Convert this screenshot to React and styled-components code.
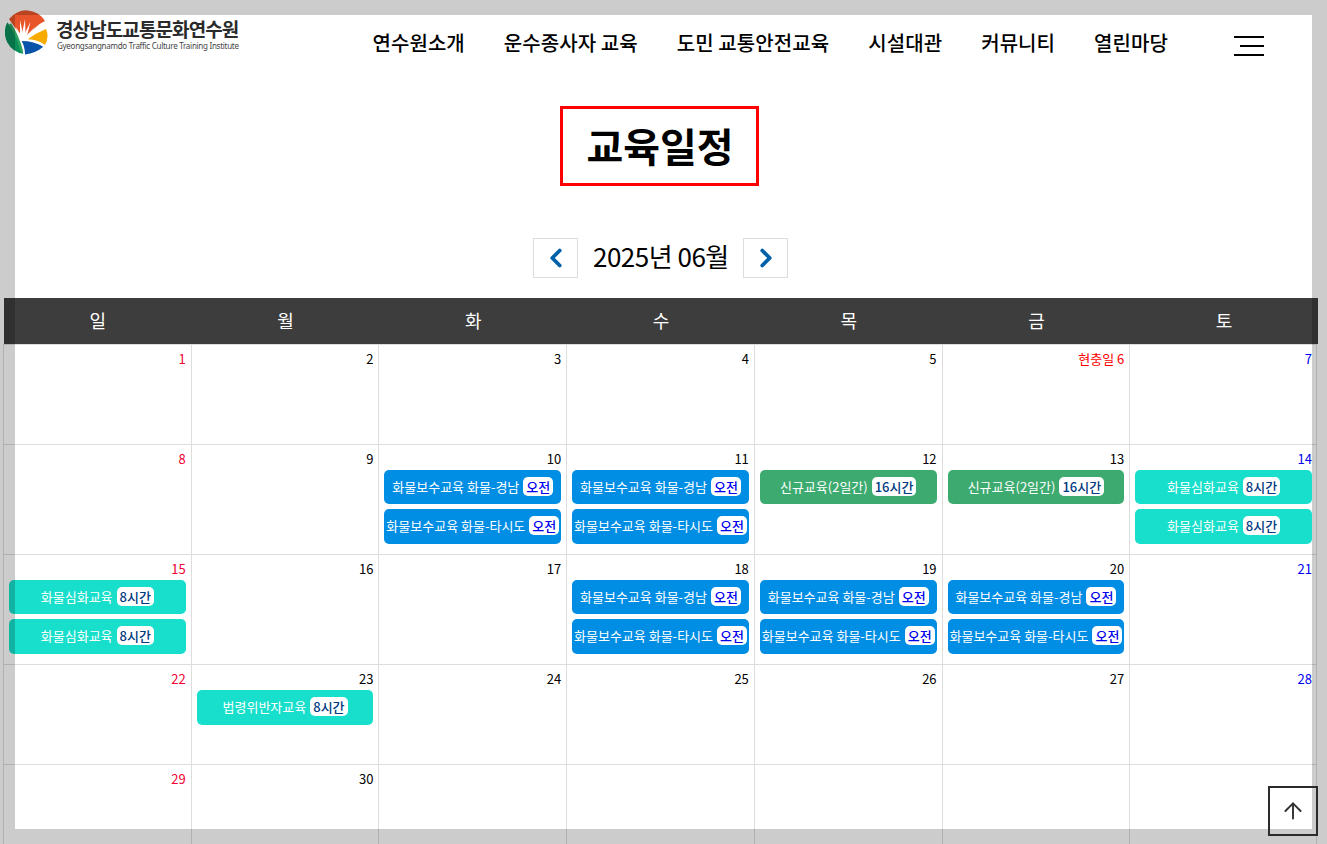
import React from "react";
import styled, { createGlobalStyle } from "styled-components";
import { ArrowUp, ChevronLeft, ChevronRight } from "lucide-react";

const NAV_ITEMS = ["연수원소개", "운수종사자 교육", "도민 교통안전교육", "시설대관", "커뮤니티", "열린마당"];
const WEEKDAYS = ["일", "월", "화", "수", "목", "금", "토"];

const GN = { title: "화물보수교육 화물-경남", badge: "오전", kind: "blue" };
const TA = { title: "화물보수교육 화물-타시도", badge: "오전", kind: "blue" };
const NEW = { title: "신규교육(2일간)", badge: "16시간", kind: "green" };
const DEEP = { title: "화물심화교육", badge: "8시간", kind: "teal" };
const LAW = { title: "법령위반자교육", badge: "8시간", kind: "teal", tall: true };

const EVENTS = {
  10: [GN, TA],
  11: [GN, TA],
  12: [NEW],
  13: [NEW],
  14: [DEEP, DEEP],
  15: [DEEP, DEEP],
  18: [GN, TA],
  19: [GN, TA],
  20: [GN, TA],
  23: [LAW],
};

const WEEKS = [
  { height: 100, days: [1, 2, 3, 4, 5, 6, 7] },
  { height: 110, days: [8, 9, 10, 11, 12, 13, 14] },
  { height: 110, days: [15, 16, 17, 18, 19, 20, 21] },
  { height: 100, days: [22, 23, 24, 25, 26, 27, 28] },
  { height: 100, days: [29, 30, null, null, null, null, null] },
];

const BAR_COLORS = { blue: "#008ee4", green: "#3dab70", teal: "#17dfcb" };
const BADGE_COLORS = { blue: "#0000ee", green: "#003a80", teal: "#003a80" };
const DAY_COLORS = ["#f00033", "#000", "#000", "#000", "#000", "#000", "#0000f0"];

const GlobalStyle = createGlobalStyle`
  html, body {
    margin: 0;
    padding: 0;
    height: 100%;
    overflow: hidden;
    background: #fff;
    font-family: "Noto Sans CJK KR", "Noto Sans", sans-serif;
    color: #000;
  }
`;

const Frame = styled.div`
  position: fixed;
  inset: 0;
  border: 15px solid rgba(0, 0, 0, 0.2);
  pointer-events: none;
  z-index: 10;
`;

const Header = styled.header`
  display: flex;
  align-items: flex-start;
  height: 106px;
  padding: 10px 63px 0 5px;
  box-sizing: border-box;
`;

const Logo = styled.a`
  display: flex;
  align-items: flex-start;
  gap: 8px;
`;

const LogoText = styled.div`
  display: flex;
  flex-direction: column;
  margin-top: 6px;
`;

const LogoTitle = styled.span`
  font-size: 19px;
  line-height: 25px;
  font-weight: 700;
  letter-spacing: -0.9px;
  margin-left: -1px;
  color: #2b2b2b;
  white-space: nowrap;
`;

const LogoSub = styled.span`
  font-family: "Noto Sans", sans-serif;
  font-size: 8px;
  line-height: 10px;
  letter-spacing: -0.27px;
  color: #444;
  white-space: nowrap;
`;

const Nav = styled.nav`
  display: flex;
  gap: 39px;
  margin-left: auto;
  margin-top: 19px;
`;

const NavItem = styled.a`
  font-size: 20px;
  line-height: 28px;
  font-weight: 500;
  letter-spacing: 0.08px;
  white-space: nowrap;
`;

const Burger = styled.button`
  display: flex;
  flex-direction: column;
  align-items: flex-end;
  gap: 7px;
  width: 30px;
  margin: 26px 0 0 66px;
  padding: 0;
  border: 0;
  background: none;
`;

const BurgerLine = styled.span`
  display: block;
  height: 2px;
  width: ${({ $short }) => ($short ? "24px" : "30px")};
  background: #000;
`;

const TitleRow = styled.div`
  display: flex;
  justify-content: center;
  padding-right: 8px;
`;

const Title = styled.h1`
  margin: 0;
  width: 199px;
  height: 80px;
  box-sizing: border-box;
  border: 3px solid #f00;
  padding-left: 1px;
  font-size: 40px;
  line-height: 72px;
  font-weight: 700;
  text-align: center;
`;

const MonthBar = styled.div`
  display: flex;
  align-items: center;
  justify-content: center;
  gap: 15px;
  height: 40px;
  margin-top: 52px;
  margin-bottom: 20px;
  padding-right: 6px;
`;

const MonthButton = styled.button`
  display: flex;
  align-items: center;
  justify-content: center;
  width: 45px;
  height: 40px;
  padding: 0;
  background: #fff;
  border: 1px solid #ddd;
  color: #0060a8;
`;

const MonthLabel = styled.span`
  width: 135px;
  margin-bottom: 4px;
  font-size: 26px;
  line-height: 38px;
  letter-spacing: -0.5px;
  text-align: center;
  white-space: nowrap;
`;

const Calendar = styled.section`
  margin-left: 3px;
  width: 1314px;
`;

const WeekHead = styled.div`
  display: grid;
  grid-template-columns: repeat(7, 1fr);
  height: 46px;
  margin: 0 -1px 0 1px;
  background: #3d3d3d;
`;

const WeekName = styled.div`
  font-size: 18px;
  line-height: 44px;
  text-align: center;
  color: #fff;
`;

const Week = styled.div`
  display: grid;
  grid-template-columns: repeat(7, 1fr);
  height: ${({ $height }) => $height}px;
  box-sizing: border-box;
  border-top: 1px solid #ddd;
`;

const Day = styled.div`
  display: flex;
  flex-direction: column;
  gap: 5px;
  padding: 4px 5px 0;
  min-width: 0;
  border-left: 1px solid #ddd;
  &:last-child {
    border-right: 1px solid #ddd;
    padding-right: 4px;
  }
`;

const DayNumber = styled.div`
  height: 16px;
  font-size: 13px;
  line-height: 20px;
  text-align: right;
  color: ${({ $color }) => $color};
`;

const EventBar = styled.a`
  display: flex;
  align-items: center;
  justify-content: center;
  gap: 4px;
  height: ${({ $tall }) => ($tall ? "35px" : "34px")};
  box-sizing: border-box;
  padding-bottom: 2px;
  border-radius: 5px;
  font-size: 13px;
  color: #fff;
  white-space: nowrap;
  overflow: hidden;
  background: ${({ $kind }) => BAR_COLORS[$kind]};
  &:nth-child(3) {
    height: 35px;
  }
`;

const Badge = styled.span`
  padding: 0 3px;
  height: 19px;
  line-height: 19px;
  border-radius: 5px;
  background: #fff;
  font-weight: 500;
  color: ${({ $kind }) => BADGE_COLORS[$kind]};
`;

const TopButton = styled.button`
  position: fixed;
  left: 1268px;
  top: 786px;
  width: 50px;
  height: 50px;
  box-sizing: border-box;
  display: flex;
  align-items: center;
  justify-content: center;
  padding: 0;
  background: transparent;
  border: 2px solid #2b2b2b;
  color: #333;
  z-index: 11;
`;

const LogoMark = () => (
  <svg width="44" height="45" viewBox="0 0 44 45" aria-hidden="true">
    <path d="M4 9 A21.7 21.7 0 0 1 40 11 Q31 15 22 27 L17 28 Q11 19 4 9 Z" fill="#e8552b" />
    <g fill="#fff">
      <circle cx="18" cy="28" r="4.5" />
      <path d="M13.5 27 L10.7 17 L16 25 Z" />
      <path d="M15 25 L15 10 L18 24 Z" />
      <path d="M17 24 L20 9 L20.5 24 Z" />
      <path d="M19.5 24 L25.5 11.7 L22 26 Z" />
      <path d="M21 26 L30 17 L23 28 Z" />
    </g>
    <path d="M22.7 29.3 Q31 23 41 19 Q44.5 27 40 35 Q34 30 22.7 29.3 Z" fill="#f7ab00" />
    <path d="M16.7 31 Q29 31 38.3 36.7 Q31 43 20 44.5 Q20 37 16.7 31 Z" fill="#0a53ab" />
    <path d="M2.3 12.3 Q14 26 18.3 43.8 A21.7 21.7 0 0 1 2.3 12.3 Z" fill="#0a8f5a" />
    <path d="M5 14 Q13 26 17 42" fill="none" stroke="#2fa35f" strokeWidth="2.5" />
  </svg>
);

const App = () => (
  <>
    <GlobalStyle />
    <Header>
      <Logo>
        <LogoMark />
        <LogoText>
          <LogoTitle>경상남도교통문화연수원</LogoTitle>
          <LogoSub>Gyeongsangnamdo Traffic Culture Training Institute</LogoSub>
        </LogoText>
      </Logo>
      <Nav>
        {NAV_ITEMS.map((item) => (
          <NavItem key={item}>{item}</NavItem>
        ))}
      </Nav>
      <Burger aria-label="메뉴">
        <BurgerLine />
        <BurgerLine $short />
        <BurgerLine />
      </Burger>
    </Header>

    <TitleRow>
      <Title>교육일정</Title>
    </TitleRow>

    <MonthBar>
      <MonthButton aria-label="이전 달">
        <ChevronLeft size={30} strokeWidth={3} />
      </MonthButton>
      <MonthLabel>2025년 06월</MonthLabel>
      <MonthButton aria-label="다음 달">
        <ChevronRight size={30} strokeWidth={3} />
      </MonthButton>
    </MonthBar>

    <Calendar>
      <WeekHead>
        {WEEKDAYS.map((name) => (
          <WeekName key={name}>{name}</WeekName>
        ))}
      </WeekHead>
      {WEEKS.map((week) => (
        <Week key={week.days[0]} $height={week.height}>
          {week.days.map((day, i) => (
            <Day key={i}>
              {day && (
                <DayNumber $color={day === 6 ? "#f00" : DAY_COLORS[i]}>
                  {day === 6 ? "현충일 6" : day}
                </DayNumber>
              )}
              {(EVENTS[day] || []).map((event, j) => (
                <EventBar key={j} $kind={event.kind} $tall={event.tall}>
                  {event.title}
                  <Badge $kind={event.kind}>{event.badge}</Badge>
                </EventBar>
              ))}
            </Day>
          ))}
        </Week>
      ))}
    </Calendar>

    <TopButton aria-label="맨 위로">
      <ArrowUp size={26} strokeWidth={1.8} />
    </TopButton>
    <Frame />
  </>
);

export default App;
